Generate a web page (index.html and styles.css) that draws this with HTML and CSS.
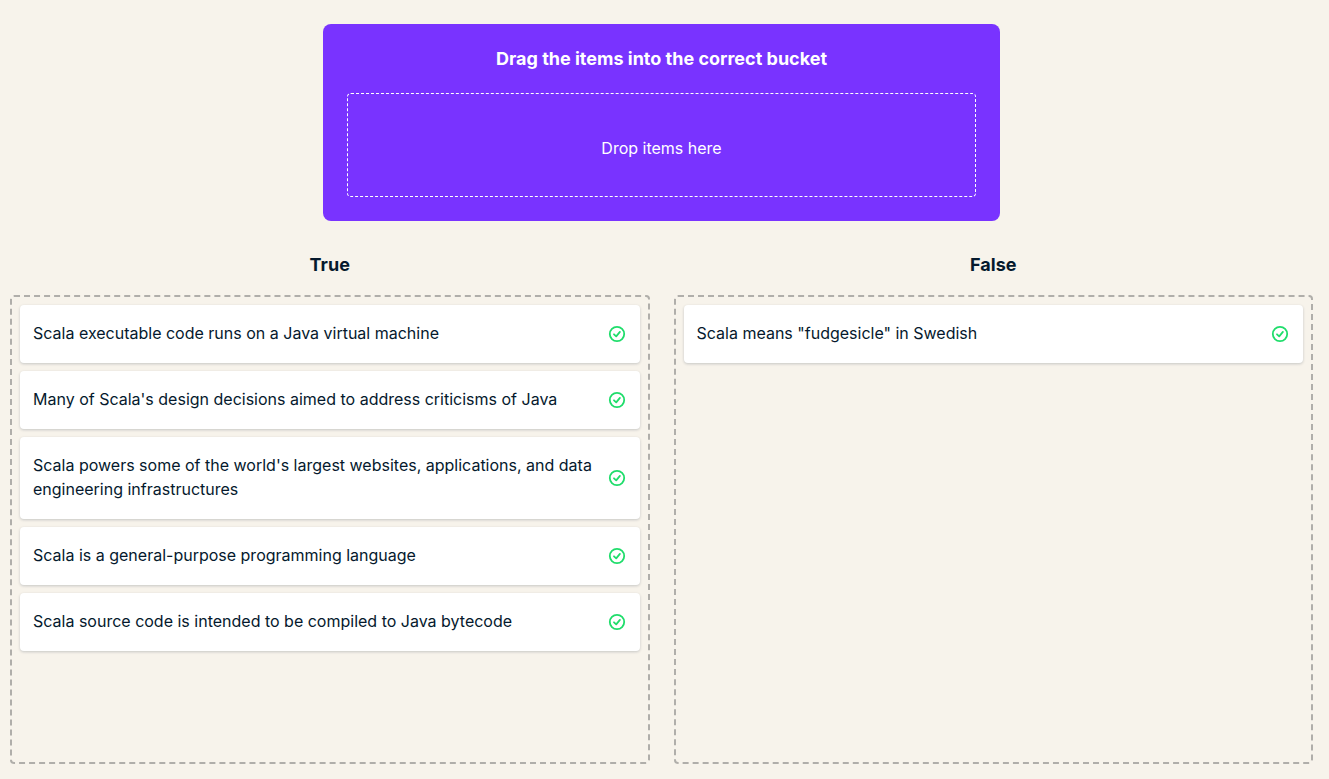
FILE: index.html
```html
<!DOCTYPE html>
<html lang="en">
<head>
<meta charset="utf-8">
<title>Drag the items into the correct bucket</title>
<link rel="stylesheet" href="styles.css">
</head>
<body>
<svg class="sprite" aria-hidden="true">
  <symbol id="check" viewBox="0 0 18 18">
    <circle cx="9" cy="9" r="7.2" fill="none" stroke="currentColor" stroke-width="1.8"/>
    <path d="M6 9.3l2.2 2 3.7-4.4" fill="none" stroke="currentColor" stroke-width="1.8" stroke-linecap="round" stroke-linejoin="round"/>
  </symbol>
</svg>
<main class="exercise">
  <section class="bank">
    <h1 class="bank-title">Drag the items into the correct bucket</h1>
    <div class="bank-drop">Drop items here</div>
  </section>
  <div class="buckets">
    <section class="bucket">
      <h2 class="bucket-title">True</h2>
      <ul class="bucket-list">
        <li class="card"><span class="card-text">Scala executable code runs on a Java virtual machine</span><svg class="card-icon" role="img" aria-label="Correct"><use href="#check"/></svg></li>
        <li class="card"><span class="card-text">Many of Scala's design decisions aimed to address criticisms of Java</span><svg class="card-icon" role="img" aria-label="Correct"><use href="#check"/></svg></li>
        <li class="card"><span class="card-text">Scala powers some of the world's largest websites, applications, and data engineering infrastructures</span><svg class="card-icon" role="img" aria-label="Correct"><use href="#check"/></svg></li>
        <li class="card"><span class="card-text">Scala is a general-purpose programming language</span><svg class="card-icon" role="img" aria-label="Correct"><use href="#check"/></svg></li>
        <li class="card"><span class="card-text">Scala source code is intended to be compiled to Java bytecode</span><svg class="card-icon" role="img" aria-label="Correct"><use href="#check"/></svg></li>
      </ul>
    </section>
    <section class="bucket">
      <h2 class="bucket-title">False</h2>
      <ul class="bucket-list">
        <li class="card"><span class="card-text">Scala means "fudgesicle" in Swedish</span><svg class="card-icon" role="img" aria-label="Correct"><use href="#check"/></svg></li>
      </ul>
    </section>
  </div>
</main>
</body>
</html>
```
FILE: styles.css
```css
* { box-sizing: border-box; }

body {
  margin: 0;
  background: #f7f3eb;
  color: #05192d;
  font-family: Inter, "Liberation Sans", sans-serif;
  font-size: 16px;
  line-height: 24px;
}

.sprite {
  position: absolute;
  width: 0;
  height: 0;
}

.exercise {
  display: flex;
  flex-direction: column;
  min-height: 100vh;
  padding: 24px 16px 15px 10px;
}

.bank {
  align-self: center;
  width: 100%;
  max-width: 677px;
  padding: 24px;
  border-radius: 8px;
  background: #7933ff;
  color: #fff;
  text-align: center;
}

.bank-title {
  margin: 0 0 24px;
  font-size: 18px;
  line-height: 21px;
}

.bank-drop {
  padding: 42px 16px 36px;
  border: 1px dashed #fff;
  border-radius: 4px;
}

.buckets {
  display: grid;
  grid-template-columns: 1fr 1fr;
  gap: 24px;
  flex: 1;
  margin-top: 32px;
}

.bucket {
  display: flex;
  flex-direction: column;
}

.bucket-title {
  margin: 0 0 18px;
  font-size: 18px;
  line-height: 24px;
  text-align: center;
}

.bucket-list {
  display: flex;
  flex-direction: column;
  gap: 8px;
  flex: 1;
  margin: 0;
  padding: 8px;
  border: 2px dashed #b0aeaa;
  border-radius: 4px;
  list-style: none;
}

.card {
  display: flex;
  align-items: center;
  gap: 4px;
  padding: 0 14px 0 13px;
  border-radius: 4px;
  background: #fff;
  box-shadow: 0 1px 3px rgba(5, 25, 45, 0.2);
}

.card-text {
  flex: 1;
  padding: 16px 0 18px;
}

.card-icon {
  flex: none;
  width: 18px;
  height: 18px;
  color: #1fdd6b;
}
```
